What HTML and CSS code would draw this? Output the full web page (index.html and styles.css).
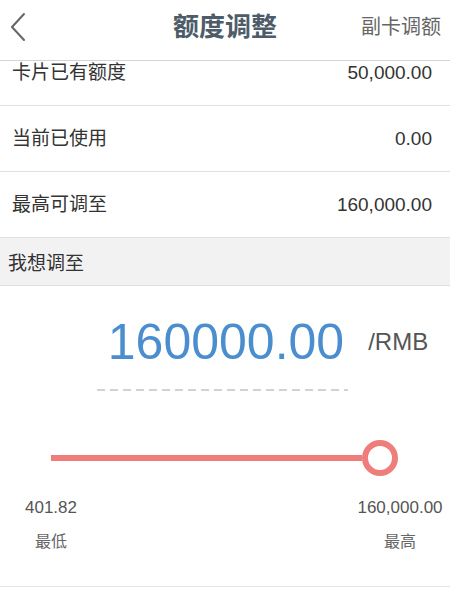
FILE: index.html
```html
<!DOCTYPE html>
<html lang="zh-CN">
<head>
<meta charset="utf-8">
<title>额度调整</title>
<link rel="stylesheet" href="styles.css">
</head>
<body>
<div class="page">
  <header class="topbar">
    <div class="back">
      <svg width="18" height="30" viewBox="0 0 18 30"><polyline points="15,2 3,15 15,28" fill="none" stroke="#666" stroke-width="2" stroke-linecap="round" stroke-linejoin="round"/></svg>
    </div>
    <h1 class="title">额度调整</h1>
    <div class="action">副卡调额</div>
  </header>

  <div class="row row-first">
    <span class="label">卡片已有额度</span>
    <span class="value">50,000.00</span>
  </div>
  <div class="row">
    <span class="label">当前已使用</span>
    <span class="value">0.00</span>
  </div>
  <div class="row">
    <span class="label">最高可调至</span>
    <span class="value">160,000.00</span>
  </div>

  <div class="section-head">我想调至</div>

  <div class="adjust">
    <div class="amount">
      <span></span>
      <span class="amount-num">160000.00</span>
      <span class="amount-unit">/RMB</span>
    </div>
    <div class="dash"></div>
    <div class="slider">
      <div class="track"></div>
      <div class="thumb"></div>
    </div>
    <div class="limits">
      <div class="limit limit-min">
        <div class="limit-num">401.82</div>
        <div class="limit-name">最低</div>
      </div>
      <div class="limit limit-max">
        <div class="limit-num">160,000.00</div>
        <div class="limit-name">最高</div>
      </div>
    </div>
  </div>
</div>
</body>
</html>
```

FILE: styles.css
```css
* { box-sizing: border-box; }
html, body { margin: 0; padding: 0; background: #fff; }
body {
  font-family: "Liberation Sans", "Noto Sans CJK SC", sans-serif;
  color: #333;
}
.page { width: 450px; }

.topbar {
  height: 61px;
  border-bottom: 1px solid #d4d4d4;
  display: grid;
  grid-template-columns: 1fr auto 1fr;
  align-items: center;
  padding: 0 9px 6px 9px;
}
.back { display: flex; align-items: center; }
.back svg { display: block; }
.title {
  margin: 0;
  font-size: 26px;
  font-weight: bold;
  color: #4e5c69;
  line-height: 30px;
}
.action {
  justify-self: end;
  font-size: 20px;
  color: #666;
  line-height: 26px;
}

.row {
  height: 66px;
  border-bottom: 1px solid #e0e0e0;
  display: flex;
  justify-content: space-between;
  align-items: center;
  padding: 0 18px 0 12px;
  font-size: 19px;
  line-height: 24px;
}
.row-first {
  height: 45px;
  align-items: flex-start;
  padding-top: 0;
}
.label { color: #333; }
.value { color: #333; }

.section-head {
  height: 48px;
  background: #f2f2f2;
  border-bottom: 1px solid #e0e0e0;
  display: flex;
  align-items: center;
  padding-left: 8px;
  font-size: 19px;
  color: #333;
}

.adjust {
  border-bottom: 1px solid #e4e4e4;
  padding-top: 26px;
  height: 301px;
}
.amount {
  display: grid;
  grid-template-columns: 1fr auto 1fr;
  align-items: center;
  height: 60px;
}
.amount-num {
  font-size: 50px;
  line-height: 60px;
  color: #4b8ecf;
  padding-left: 2px;
}
.amount-unit {
  font-size: 24px;
  color: #555;
  padding-left: 24px;
}
.dash {
  width: 251px;
  height: 2px;
  margin: 17px 0 0 97px;
  background: repeating-linear-gradient(to right, #d2d2d2 0 8px, transparent 8px 13px);
}
.slider {
  display: flex;
  align-items: center;
  margin-top: 49px;
  padding: 0 52px 0 51px;
  height: 36px;
}
.track {
  flex: 1;
  height: 6px;
  background: #ef7d79;
}
.thumb {
  width: 36px;
  height: 36px;
  border: 6px solid #ef7d79;
  border-radius: 50%;
  background: #fff;
}
.limits {
  display: flex;
  justify-content: space-between;
  margin-top: 22px;
  padding: 0 1px 0 11px;
}
.limit { text-align: center; }
.limit-min { width: 80px; }
.limit-max { width: 98px; }
.limit-num {
  font-size: 17px;
  line-height: 20px;
  color: #555;
}
.limit-name {
  margin-top: 13px;
  font-size: 16px;
  line-height: 22px;
  color: #666;
}
```
